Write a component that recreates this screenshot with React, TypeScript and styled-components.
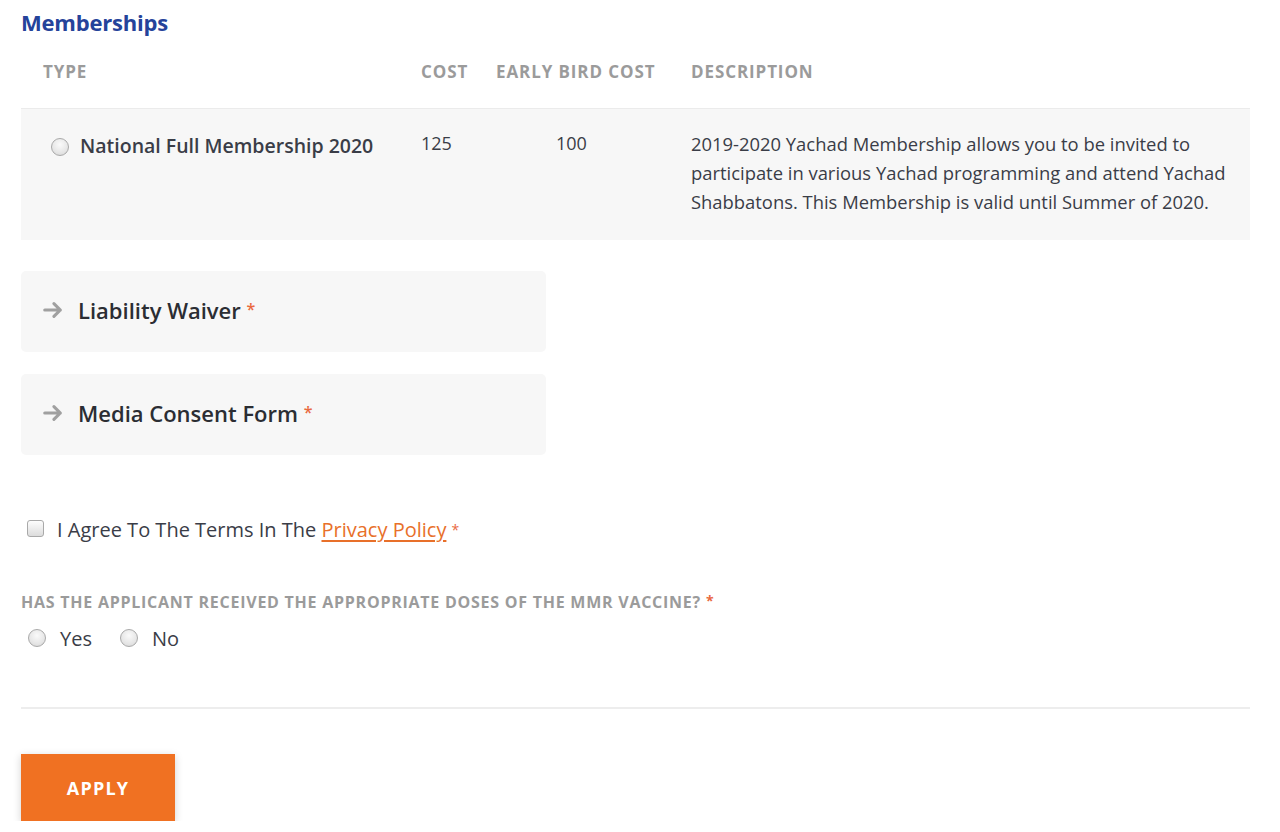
import styled, { createGlobalStyle } from "styled-components";

const GlobalStyle = createGlobalStyle`
  * { box-sizing: border-box; }
  body {
    margin: 0;
    background: #fff;
    font-family: "Open Sans", Lato, Arial, sans-serif;
    color: #3a3d47;
  }
`;

type Membership = {
  name: string;
  cost: string;
  earlyBird: string;
  description: string[];
};

const memberships: Membership[] = [
  {
    name: "National Full Membership 2020",
    cost: "125",
    earlyBird: "100",
    description: [
      "2019-2020 Yachad Membership allows you to be invited to",
      "participate in various Yachad programming and attend Yachad",
      "Shabbatons. This Membership is valid until Summer of 2020.",
    ],
  },
];

const forms = ["Liability Waiver", "Media Consent Form"];

const ArrowIcon = () => (
  <svg width="22" height="22" viewBox="0 0 24 24" fill="none">
    <path
      d="M3 12h17M13 5l7 7-7 7"
      stroke="#a0a0a0"
      strokeWidth="3.4"
      strokeLinecap="round"
      strokeLinejoin="round"
    />
  </svg>
);

const App: React.FC = () => {
  return (
    <Page>
      <GlobalStyle />
      <Heading>Memberships</Heading>
      <Table>
        <HeadRow>
          <HeadCell>Type</HeadCell>
          <HeadCell>Cost</HeadCell>
          <HeadCell>Early Bird Cost</HeadCell>
          <HeadCell>Description</HeadCell>
        </HeadRow>
        {memberships.map((m) => (
          <BodyRow key={m.name}>
            <TypeCell>
              <Radio type="radio" name="membership" />
              <TypeName>{m.name}</TypeName>
            </TypeCell>
            <BodyCell>{m.cost}</BodyCell>
            <BodyCell indent={82}>{m.earlyBird}</BodyCell>
            <Description>
              {m.description.map((line) => (
                <span key={line}>{line}</span>
              ))}
            </Description>
          </BodyRow>
        ))}
      </Table>

      <Forms>
        {forms.map((f) => (
          <FormCard key={f}>
            <ArrowIcon />
            <FormTitle>
              {f} <Required>*</Required>
            </FormTitle>
          </FormCard>
        ))}
      </Forms>

      <AgreeRow>
        <Checkbox type="checkbox" />
        <AgreeText>
          I Agree To The Terms In The <PolicyLink href="#">Privacy Policy</PolicyLink>{" "}
          <Required small>*</Required>
        </AgreeText>
      </AgreeRow>

      <Question>
        Has the applicant received the appropriate doses of the MMR vaccine?{" "}
        <Required small>*</Required>
      </Question>
      <Options>
        <Option>
          <Radio type="radio" name="mmr" />
          <OptionText>Yes</OptionText>
        </Option>
        <Option>
          <Radio type="radio" name="mmr" />
          <OptionText>No</OptionText>
        </Option>
      </Options>

      <Divider />

      <ApplyButton>Apply</ApplyButton>
    </Page>
  );
};

export default App;

const Page = styled.div`
  padding: 8px 30px 0 21px;
  width: 1280px;
`;

const Heading = styled.h2`
  margin: 0;
  font-size: 22px;
  line-height: 28px;
  font-weight: 700;
  letter-spacing: -0.2px;
  color: #25439a;
`;

const Table = styled.div`
  margin-top: 23px;
  width: 1229px;
`;

const columns = "378px 75px 195px 1fr";

const HeadRow = styled.div`
  display: grid;
  grid-template-columns: ${columns};
  height: 50px;
  padding-top: 2px;
  border-bottom: 1px solid #ebebeb;
`;

const HeadCell = styled.div`
  padding-left: 22px;
  font-size: 17px;
  line-height: 22px;
  font-weight: 700;
  letter-spacing: 0.9px;
  text-transform: uppercase;
  color: #9b9b9b;
`;

const BodyRow = styled.div`
  display: grid;
  grid-template-columns: ${columns};
  background: #f7f7f7;
  padding: 20px 0 24px;
`;

const TypeCell = styled.div`
  display: flex;
  align-items: flex-start;
  gap: 11px;
  padding-left: 30px;
`;

const TypeName = styled.span`
  font-size: 19.5px;
  line-height: 34px;
  font-weight: 600;
  color: #3a3d47;
`;

const BodyCell = styled.div<{ indent?: number }>`
  padding-left: ${({ indent }) => indent ?? 22}px;
  font-size: 18px;
  line-height: 29px;
  color: #3a3d47;
`;

const Description = styled.div`
  padding-left: 22px;
  display: flex;
  flex-direction: column;
  font-size: 18.4px;
  line-height: 29px;
  color: #3a3d47;
  white-space: nowrap;
`;

const Radio = styled.input`
  appearance: none;
  margin: 0;
  flex: none;
  width: 18px;
  height: 18px;
  border-radius: 50%;
  border: 1px solid #a9a9a9;
  background: radial-gradient(circle at 50% 35%, #fafafa 0%, #e6e6e6 60%, #d4d4d4 100%);
  margin-top: 9px;
`;

const Forms = styled.div`
  margin-top: 31px;
  display: flex;
  flex-direction: column;
  gap: 22px;
`;

const FormCard = styled.div`
  width: 525px;
  height: 81px;
  background: #f7f7f7;
  border-radius: 5px;
  display: flex;
  align-items: center;
  gap: 14px;
  padding: 0 0 3px 21px;
`;

const FormTitle = styled.span`
  font-size: 22px;
  font-weight: 600;
  color: #2b2d33;
`;

const Required = styled.span<{ small?: boolean }>`
  color: #e9693f;
  font-size: ${({ small }) => (small ? 14 : 16)}px;
  vertical-align: ${({ small }) => (small ? 2 : 4)}px;
`;

const AgreeRow = styled.div`
  margin-top: 61px;
  display: flex;
  align-items: flex-start;
  gap: 13px;
  padding-left: 6px;
`;

const Checkbox = styled.input`
  appearance: none;
  margin: 4px 0 0;
  width: 17px;
  height: 17px;
  border-radius: 3px;
  border: 1px solid #a9a9a9;
  background: linear-gradient(#fdfdfd, #dcdcdc);
`;

const AgreeText = styled.span`
  font-size: 20px;
  line-height: 28px;
  color: #3a3d47;
`;

const PolicyLink = styled.a`
  color: #e8702a;
  text-decoration: underline;
  text-underline-offset: 3px;
`;

const Question = styled.div`
  margin-top: 46px;
  font-size: 16px;
  line-height: 22px;
  font-weight: 700;
  letter-spacing: 0.75px;
  text-transform: uppercase;
  color: #9b9b9b;
`;

const Options = styled.div`
  margin-top: 13px;
  display: flex;
  gap: 28px;
  padding-left: 7px;
`;

const Option = styled.label`
  display: flex;
  align-items: flex-start;
  gap: 14px;
  ${Radio} {
    margin-top: 3px;
  }
`;

const OptionText = styled.span`
  font-size: 20px;
  line-height: 26px;
  color: #3a3d47;
`;

const Divider = styled.hr`
  margin: 55px 0 0;
  width: 1229px;
  border: none;
  border-top: 2px solid #ededed;
`;

const ApplyButton = styled.button`
  margin-top: 45px;
  width: 154px;
  height: 67px;
  border: none;
  background: #f07122;
  color: #fff;
  font-family: inherit;
  font-size: 18px;
  font-weight: 700;
  letter-spacing: 1.2px;
  text-transform: uppercase;
  box-shadow: 0 2px 8px rgba(0, 0, 0, 0.18);
`;
